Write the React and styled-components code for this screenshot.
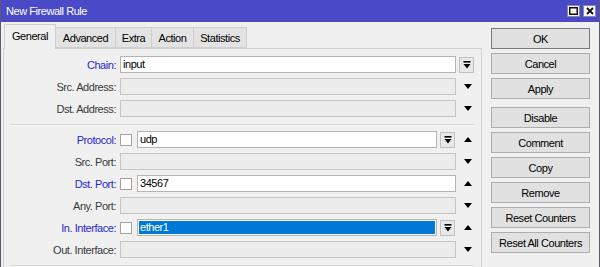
import styled, { createGlobalStyle } from 'styled-components';

const GlobalStyle = createGlobalStyle`
  * { box-sizing: border-box; }
  body {
    margin: 0;
    font-family: "Liberation Sans", Arial, sans-serif;
    font-size: 11px;
    letter-spacing: -0.45px;
    color: #000;
    background: #f0f0f0;
  }
`;

const Window = styled.div`
  width: 600px;
  height: 267px;
  overflow: hidden;
  background: #f0f0f0;
  border-left: 1px solid #5a5a6a;
  border-right: 1px solid #5a5a6a;
`;

const TitleBar = styled.div`
  height: 22px;
  background: #4a4ac8;
  color: #fff;
  display: flex;
  align-items: center;
  justify-content: space-between;
  padding: 0 3px 0 5px;
`;

const TitleText = styled.span`
  font-size: 11px;
`;

const WinButtons = styled.div`
  display: flex;
  gap: 3px;
`;

const WinButton = styled.div`
  width: 13px;
  height: 12px;
  background: #f4f4f4;
  border: 1px solid #8a8aa0;
  display: flex;
  align-items: center;
  justify-content: center;
`;

const Body = styled.div`
  display: flex;
  gap: 9px;
  padding: 2px 0 0 2px;
`;

const LeftCol = styled.div`
  width: 479px;
  display: flex;
  flex-direction: column;
`;

const TabStrip = styled.div`
  display: flex;
  align-items: flex-end;
  height: 24px;
  padding-left: 1px;
  position: relative;
  z-index: 1;
`;

const Tab = styled.div`
  width: ${p => p.$w}px;
  height: ${p => (p.$active ? 25 : 21)}px;
  margin-bottom: ${p => (p.$active ? -1 : 0)}px;
  background: ${p => (p.$active ? '#f0f0f0' : '#e3e3e3')};
  border: 1px solid #cfcfcf;
  border-bottom: ${p => (p.$active ? 'none' : '1px solid #cfcfcf')};
  margin-left: ${p => (p.$first ? 0 : -1)}px;
  display: flex;
  align-items: center;
  justify-content: center;
  padding-bottom: ${p => (p.$active ? 3 : 0)}px;
`;

const Panel = styled.div`
  border: 1px solid #d2d2d2;
  background: #f0f0f0;
  height: 240px;
  padding-top: 7px;
`;

const Row = styled.div`
  display: flex;
  align-items: center;
  height: 17px;
  margin-bottom: 5px;
`;

const Label = styled.div`
  width: 116px;
  padding-right: 4px;
  text-align: right;
  color: ${p => (p.$blue ? '#2727d0' : '#3a3a3a')};
  white-space: nowrap;
`;

const FieldArea = styled.div`
  width: 336px;
  height: 17px;
  display: flex;
  align-items: center;
`;

const Input = styled.div`
  flex: 1;
  height: 17px;
  border: 1px solid ${p => (p.$empty ? '#c6c6c6' : '#b4b4b4')};
  background: ${p => (p.$empty ? '#ececec' : '#fff')};
  padding: 1px;
  display: flex;
  align-items: center;
  line-height: 13px;
`;

const InputText = styled.span`
  flex: 1;
  height: 13px;
  padding-left: 1px;
  background: ${p => (p.$selected ? '#0078d7' : 'transparent')};
  color: ${p => (p.$selected ? '#fff' : '#000')};
`;

const Check = styled.div`
  width: 12px;
  height: 12px;
  border: 1px solid #a3a3a3;
  background: #fff;
  margin-right: 5px;
`;

const DropBtn = styled.div`
  width: 15px;
  height: 16px;
  border: 1px solid #c0c0c0;
  background: #e8e8e8;
  margin-left: 3px;
  margin-right: ${p => (p.$inner ? 1 : 0)}px;
  display: flex;
  align-items: center;
  justify-content: center;
`;

const Trailing = styled.div`
  width: 24px;
  height: 17px;
  display: flex;
  align-items: center;
  justify-content: ${p => (p.$btn ? 'flex-start' : 'center')};
`;

const Tri = styled.div`
  width: 0;
  height: 0;
  border-left: 4.5px solid transparent;
  border-right: 4.5px solid transparent;
  ${p =>
    p.$up
      ? 'border-bottom: 5px solid #000;'
      : 'border-top: 5px solid #000;'}
`;

const Separator = styled.div`
  margin: 7px 7px 5px 6px;
  height: 2px;
  border-top: 1px solid #d4d4d4;
  border-bottom: 1px solid #fbfbfb;
`;

const RightCol = styled.div`
  width: 99px;
  padding-top: 4px;
  display: flex;
  flex-direction: column;
`;

const Button = styled.div`
  height: 21px;
  margin-bottom: ${p => (p.$gapAfter ? 8 : 4)}px;
  border: 1px solid ${p => (p.$default ? '#7a7a7a' : '#adadad')};
  background: #e1e1e1;
  display: flex;
  align-items: center;
  justify-content: center;
  white-space: nowrap;
`;

const DropGlyph = () => (
  <svg width="8" height="8" viewBox="0 0 8 8">
    <rect x="0.5" y="0" width="7" height="1.6" fill="#000" />
    <polygon points="0.5,3 7.5,3 4,7.5" fill="#000" />
  </svg>
);

const tabs = [
  { name: 'General', w: 52, active: true },
  { name: 'Advanced', w: 61 },
  { name: 'Extra', w: 37 },
  { name: 'Action', w: 43 },
  { name: 'Statistics', w: 54 },
];

const buttons = [
  { name: 'OK', def: true },
  { name: 'Cancel' },
  { name: 'Apply', gap: true },
  { name: 'Disable' },
  { name: 'Comment' },
  { name: 'Copy' },
  { name: 'Remove' },
  { name: 'Reset Counters' },
  { name: 'Reset All Counters' },
];

const FieldRow = ({ label, blue, value, check, drop, tri, selected }) => (
  <Row>
    <Label $blue={blue}>{label}:</Label>
    <FieldArea>
      {check && <Check />}
      <Input $empty={value === undefined}>
        <InputText $selected={selected}>{value}</InputText>
      </Input>
      {drop === 'inner' && (
        <DropBtn $inner>
          <DropGlyph />
        </DropBtn>
      )}
    </FieldArea>
    <Trailing $btn={drop === 'outer'}>
      {drop === 'outer' && (
        <DropBtn>
          <DropGlyph />
        </DropBtn>
      )}
      {tri && <Tri $up={tri === 'up'} />}
    </Trailing>
  </Row>
);

export default function App() {
  return (
    <>
      <GlobalStyle />
      <Window>
        <TitleBar>
          <TitleText>New Firewall Rule</TitleText>
          <WinButtons>
            <WinButton>
              <svg width="9" height="8" viewBox="0 0 9 8">
                <rect x="0.75" y="0.75" width="7.5" height="6.5" fill="none" stroke="#111" strokeWidth="1.5" />
              </svg>
            </WinButton>
            <WinButton>
              <svg width="8" height="8" viewBox="0 0 8 8">
                <path d="M1 1 L7 7 M7 1 L1 7" stroke="#111" strokeWidth="1.8" />
              </svg>
            </WinButton>
          </WinButtons>
        </TitleBar>
        <Body>
          <LeftCol>
            <TabStrip>
              {tabs.map((t, i) => (
                <Tab key={t.name} $w={t.w} $active={t.active} $first={i === 0}>
                  {t.name}
                </Tab>
              ))}
            </TabStrip>
            <Panel>
              <FieldRow label="Chain" blue value="input" drop="outer" />
              <FieldRow label="Src. Address" tri="down" />
              <FieldRow label="Dst. Address" tri="down" />
              <Separator />
              <FieldRow label="Protocol" blue check value="udp" drop="inner" tri="up" />
              <FieldRow label="Src. Port" tri="down" />
              <FieldRow label="Dst. Port" blue check value="34567" tri="up" />
              <FieldRow label="Any. Port" tri="down" />
              <FieldRow label="In. Interface" blue check value="ether1" selected drop="inner" tri="up" />
              <FieldRow label="Out. Interface" tri="down" />
              <Separator />
            </Panel>
          </LeftCol>
          <RightCol>
            {buttons.map(b => (
              <Button key={b.name} $default={b.def} $gapAfter={b.gap}>
                {b.name}
              </Button>
            ))}
          </RightCol>
        </Body>
      </Window>
    </>
  );
}
